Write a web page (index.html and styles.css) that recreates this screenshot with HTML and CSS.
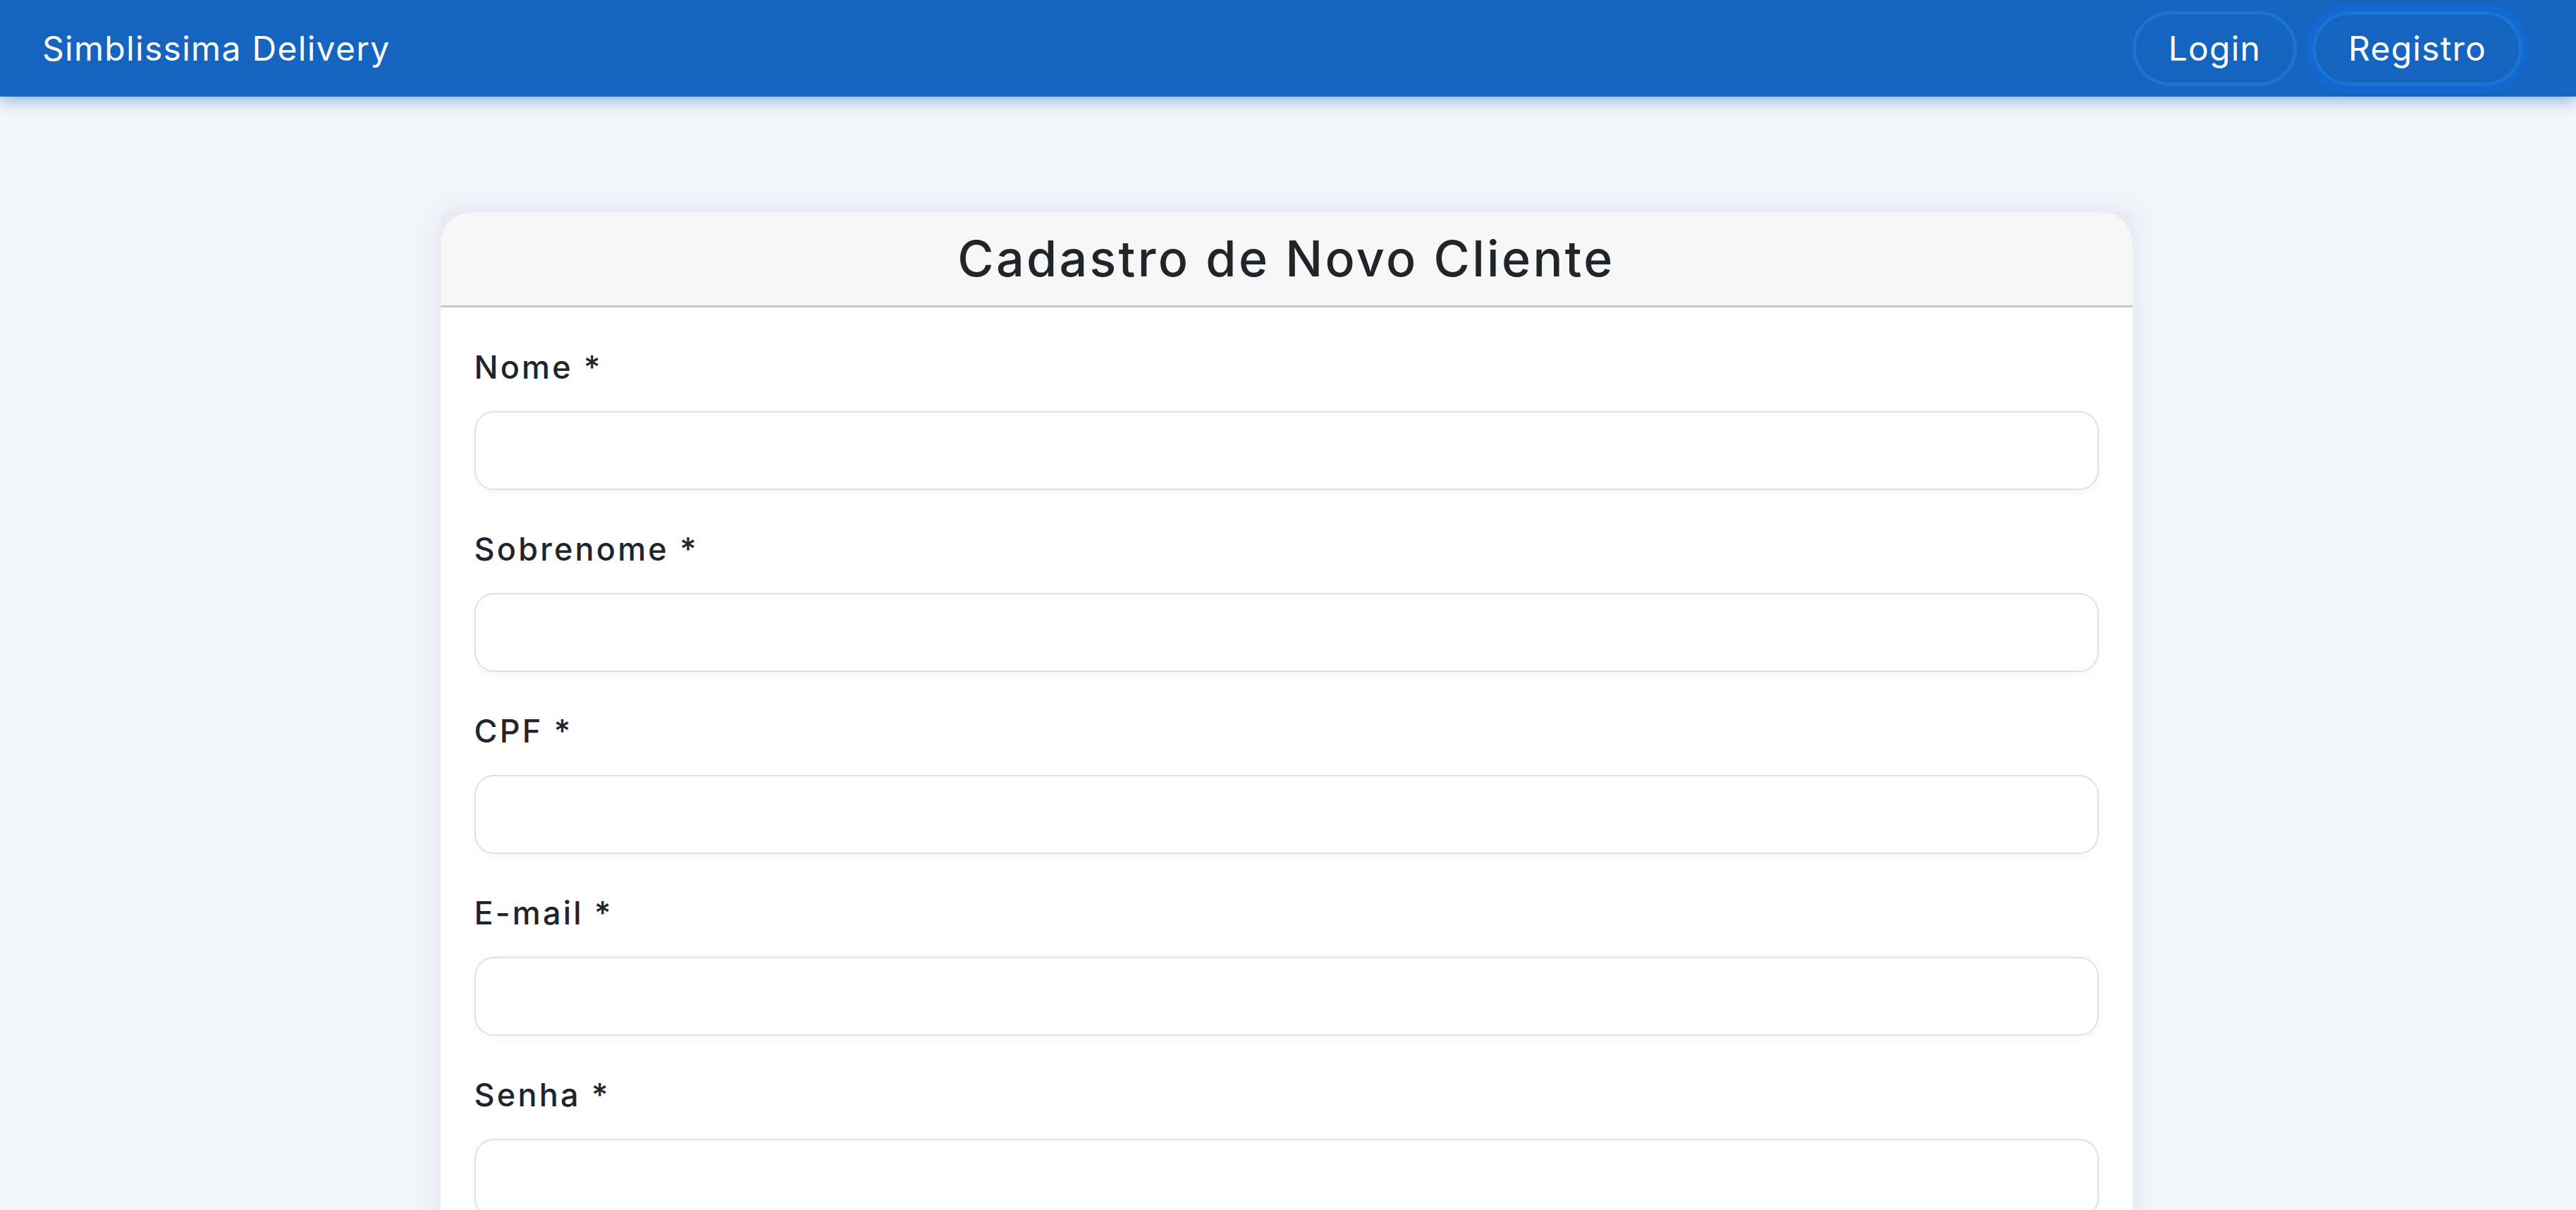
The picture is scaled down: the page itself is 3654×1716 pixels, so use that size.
FILE: index.html
```html
<!DOCTYPE html>
<html lang="pt-BR">
<head>
<meta charset="utf-8">
<title>Cadastro de Novo Cliente - Simblissima Delivery</title>
<link rel="stylesheet" href="styles.css">
</head>
<body>
<nav class="navbar">
  <a class="brand" href="#">Simblissima Delivery</a>
  <div class="nav-actions">
    <a class="btn-nav" href="#">Login</a>
    <a class="btn-nav btn-focus" href="#">Registro</a>
  </div>
</nav>
<main class="page">
  <section class="card">
    <header class="card-header">
      <h1 class="card-title">Cadastro de Novo Cliente</h1>
    </header>
    <form class="card-body">
      <div class="field">
        <label class="field-label" for="nome">Nome *</label>
        <input class="field-input" id="nome" type="text">
      </div>
      <div class="field">
        <label class="field-label" for="sobrenome">Sobrenome *</label>
        <input class="field-input" id="sobrenome" type="text">
      </div>
      <div class="field">
        <label class="field-label" for="cpf">CPF *</label>
        <input class="field-input" id="cpf" type="text">
      </div>
      <div class="field">
        <label class="field-label" for="email">E-mail *</label>
        <input class="field-input" id="email" type="email">
      </div>
      <div class="field">
        <label class="field-label" for="senha">Senha *</label>
        <input class="field-input" id="senha" type="password">
      </div>
    </form>
  </section>
</main>
</body>
</html>
```
FILE: styles.css
```css
* {
  box-sizing: border-box;
}

html, body {
  margin: 0;
  padding: 0;
}

body {
  background: #f3f5fa;
  font-family: "Inter", "Liberation Sans", sans-serif;
  color: #212529;
  min-height: 100vh;
}

.navbar {
  height: 137px;
  background: #1565c0;
  display: flex;
  align-items: center;
  justify-content: space-between;
  padding: 0 76px 0 60px;
  box-shadow: 0 6px 18px rgba(21, 101, 192, 0.45);
  position: relative;
  z-index: 2;
}

.brand {
  color: #ffffff;
  text-decoration: none;
  font-size: 48px;
  font-weight: 400;
  letter-spacing: 1.3px;
}

.nav-actions {
  display: flex;
  align-items: center;
  gap: 22px;
}

.btn-nav {
  display: flex;
  align-items: center;
  justify-content: center;
  height: 106px;
  padding: 0 46px;
  border: 5px solid #1a74d3;
  border-radius: 60px;
  color: #ffffff;
  text-decoration: none;
  font-size: 48px;
  font-weight: 400;
  letter-spacing: 1.2px;
}

.btn-focus {
  box-shadow: 0 0 0 10px #1367cf;
}

.page {
  padding: 164px 5px 120px 0;
  display: flex;
  justify-content: center;
}

.card {
  width: 2400px;
  background: #e7eaf3;
  border-radius: 12px;
  box-shadow: 0 0 40px rgba(70, 110, 210, 0.12);
  display: flex;
  flex-direction: column;
}

.card-header {
  background: #f7f7f7;
  border-radius: 44px 44px 0 0;
  border-bottom: 3px solid #c9c9c9;
  text-align: center;
}

.card-title {
  margin: 0;
  font-size: 70px;
  font-weight: 500;
  line-height: 132px;
  letter-spacing: 3.3px;
  color: #212529;
}

.card-body {
  background: #ffffff;
  padding: 52px 48px 40px;
  display: flex;
  flex-direction: column;
  gap: 51px;
}

.field {
  display: flex;
  flex-direction: column;
  gap: 29px;
}

.field-label {
  font-size: 45px;
  font-weight: 500;
  line-height: 66px;
  letter-spacing: 3.2px;
  color: #212529;
}

.field-input {
  height: 112px;
  width: 100%;
  border: 2px solid #dfe0ee;
  border-radius: 28px;
  background: #ffffff;
  box-shadow: 0 3px 8px rgba(60, 80, 160, 0.06);
  font-family: inherit;
  font-size: 44px;
  padding: 0 28px;
}
```
